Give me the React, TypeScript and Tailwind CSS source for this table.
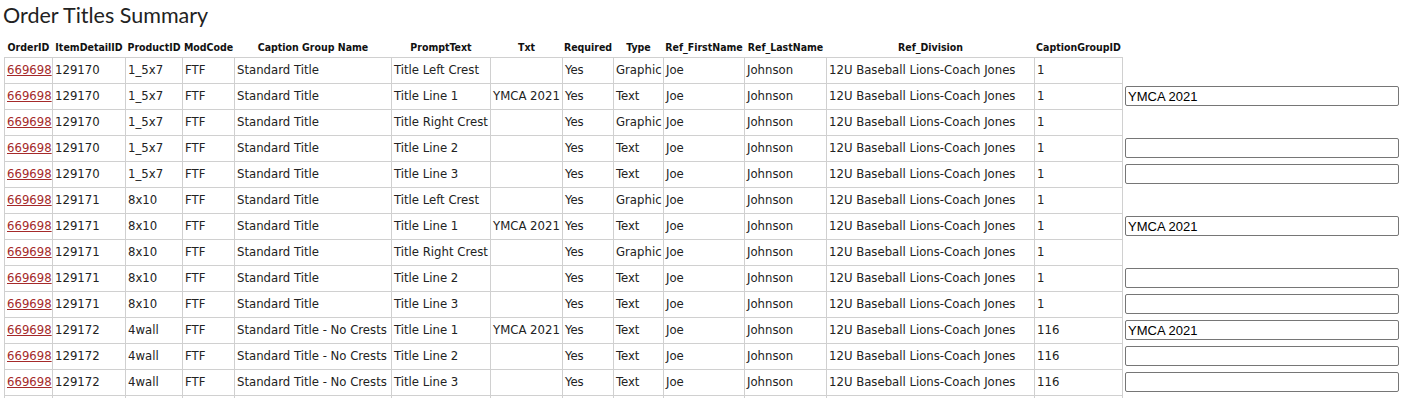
import React from "react";

type Row = {
  item: string;
  product: string;
  group: string;
  prompt: string;
  txt: string;
  type: string;
  cgid: string;
  input: null | string;
};

const mk = (
  item: string,
  product: string,
  group: string,
  prompt: string,
  txt: string,
  type: string,
  cgid: string,
  input: null | string
): Row => ({ item, product, group, prompt, txt, type, cgid, input });

const rows: Row[] = [
  mk("129170", "1_5x7", "Standard Title", "Title Left Crest", "", "Graphic", "1", null),
  mk("129170", "1_5x7", "Standard Title", "Title Line 1", "YMCA 2021", "Text", "1", "YMCA 2021"),
  mk("129170", "1_5x7", "Standard Title", "Title Right Crest", "", "Graphic", "1", null),
  mk("129170", "1_5x7", "Standard Title", "Title Line 2", "", "Text", "1", ""),
  mk("129170", "1_5x7", "Standard Title", "Title Line 3", "", "Text", "1", ""),
  mk("129171", "8x10", "Standard Title", "Title Left Crest", "", "Graphic", "1", null),
  mk("129171", "8x10", "Standard Title", "Title Line 1", "YMCA 2021", "Text", "1", "YMCA 2021"),
  mk("129171", "8x10", "Standard Title", "Title Right Crest", "", "Graphic", "1", null),
  mk("129171", "8x10", "Standard Title", "Title Line 2", "", "Text", "1", ""),
  mk("129171", "8x10", "Standard Title", "Title Line 3", "", "Text", "1", ""),
  mk("129172", "4wall", "Standard Title - No Crests", "Title Line 1", "YMCA 2021", "Text", "116", "YMCA 2021"),
  mk("129172", "4wall", "Standard Title - No Crests", "Title Line 2", "", "Text", "116", ""),
  mk("129172", "4wall", "Standard Title - No Crests", "Title Line 3", "", "Text", "116", ""),
];

const headers = [
  "OrderID",
  "ItemDetailID",
  "ProductID",
  "ModCode",
  "Caption Group Name",
  "PromptText",
  "Txt",
  "Required",
  "Type",
  "Ref_FirstName",
  "Ref_LastName",
  "Ref_Division",
  "CaptionGroupID",
  "",
];

const widths = [48, 73, 57, 52, 157, 99, 72, 51, 50, 81, 82, 208, 88, 285];

const td = "border border-[#d0d0d0] h-[26px] px-[2px] py-0 align-middle whitespace-nowrap overflow-hidden";

export default function App() {
  return (
    <div
      className="h-[398px] overflow-hidden bg-white text-[#222]"
      style={{ fontFamily: '"DejaVu Sans Condensed", "DejaVu Sans", sans-serif' }}
    >
      <h1
        className="pl-[3px] pt-[1px] text-[21.5px] leading-[28px] font-normal text-[#222]"
        style={{ fontFamily: 'Lato, "Noto Sans", sans-serif' }}
      >
        Order Titles Summary
      </h1>
      <table className="ml-[4px] mt-[11px] w-[1403px] border-collapse table-fixed text-[13px]">
        <colgroup>
          {widths.map((w, i) => (
            <col key={i} style={{ width: w }} />
          ))}
        </colgroup>
        <thead>
          <tr>
            {headers.map((h, i) => (
              <th
                key={i}
                className="px-0 pt-0 pb-[2px] h-[17px] text-[10.5px] font-bold text-center whitespace-nowrap leading-[13px] text-[#111] overflow-visible"
              >
                {h}
              </th>
            ))}
          </tr>
        </thead>
        <tbody>
          {rows.map((r, i) => (
            <tr key={i}>
              <td className={td}>
                <a href="#" className="text-[#a52a2a] underline">
                  669698
                </a>
              </td>
              <td className={td}>{r.item}</td>
              <td className={td}>{r.product}</td>
              <td className={td}>FTF</td>
              <td className={td}>{r.group}</td>
              <td className={td}>{r.prompt}</td>
              <td className={td}>{r.txt}</td>
              <td className={td}>Yes</td>
              <td className={td}>{r.type}</td>
              <td className={td}>Joe</td>
              <td className={td}>Johnson</td>
              <td className={td}>12U Baseball Lions-Coach Jones</td>
              <td className={td}>{r.cgid}</td>
              <td className="h-[26px] pl-[2px] py-0 align-middle">
                {r.input !== null && (
                  <input
                    type="text"
                    defaultValue={r.input}
                    className="block w-[274px] h-[20px] border border-[#767676] rounded-[2px] px-[2px] text-[13px] text-black bg-white"
                    style={{ fontFamily: '"Liberation Sans", Arial, sans-serif' }}
                  />
                )}
              </td>
            </tr>
          ))}
          <tr>
            <td className={td}></td>
            <td className={td}></td>
            <td className={td}></td>
            <td className={td}></td>
            <td className={td}></td>
            <td className={td}></td>
            <td className={td}></td>
            <td className={td}></td>
            <td className={td}></td>
            <td className={td}></td>
            <td className={td}></td>
            <td className={td}></td>
            <td className={td}></td>
            <td className="h-[26px]"></td>
          </tr>
        </tbody>
      </table>
    </div>
  );
}
